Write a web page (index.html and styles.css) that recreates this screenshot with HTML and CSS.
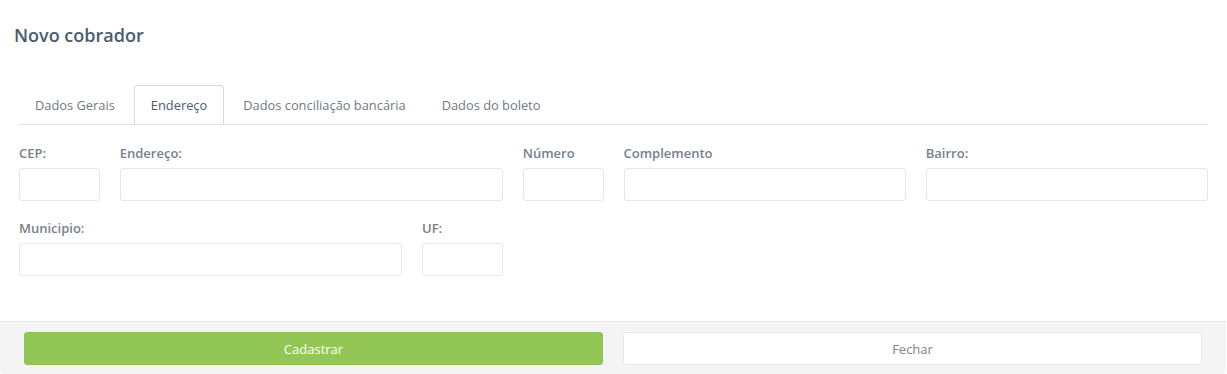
FILE: index.html
```html
<!DOCTYPE html>
<html>
<head>
    <title>Novo cobrador</title>
    <link rel="stylesheet" href="styles.css">
</head>
<body>
    <div class="modal">
        <div class="modal-header">
            <h4>Novo cobrador</h4>
        </div>
        <div class="modal-body">
            <ul class="tabs">
                <li><a href="#">Dados Gerais</a></li>
                <li class="active"><a href="#">Endereço</a></li>
                <li><a href="#">Dados conciliação bancária</a></li>
                <li><a href="#">Dados do boleto</a></li>
            </ul>
            <form class="form-grid">
                <div class="field span-1">
                    <label>CEP:</label>
                    <input type="text">
                </div>
                <div class="field span-4">
                    <label>Endereço:</label>
                    <input type="text">
                </div>
                <div class="field span-1">
                    <label>Número</label>
                    <input type="text">
                </div>
                <div class="field span-3">
                    <label>Complemento</label>
                    <input type="text">
                </div>
                <div class="field span-3">
                    <label>Bairro:</label>
                    <input type="text">
                </div>
                <div class="field span-4">
                    <label>Municipio:</label>
                    <input type="text">
                </div>
                <div class="field span-1">
                    <label>UF:</label>
                    <input type="text">
                </div>
            </form>
        </div>
        <div class="modal-footer">
            <button type="button" class="btn btn-success">Cadastrar</button>
            <button type="button" class="btn btn-default">Fechar</button>
        </div>
    </div>
</body>
</html>
```

FILE: styles.css
```css
* { box-sizing: border-box; }
body { margin: 0; background: #fff; font-family: "Open Sans", "Noto Sans", sans-serif; font-size: 13px; }
.modal { width: 1226px; background: #fff; border-radius: 4px; overflow: hidden; }
.modal-header { padding: 23px 14px 0; }
.modal-header h4 { margin: 0; font-size: 18px; line-height: 24px; font-weight: 600; color: #4b5b70; }
.modal-body { padding: 38px 18px 45px 18px; }
.tabs { list-style: none; margin: 0; padding: 0; display: flex; border-bottom: 1px solid #dee2e6; }
.tabs li { margin-right: 2px; margin-bottom: -1px; }
.tabs a { display: block; padding: 9px 16px 9px 16px; line-height: 20px; font-size: 12.85px; border: 1px solid transparent; border-radius: 4px 4px 0 0; color: #6f7a85; text-decoration: none; }
.tabs li.active a { border-color: #d5dbe1; border-bottom-color: #dee2e6; color: #4b5b70; }
.form-grid { display: grid; grid-template-columns: repeat(12, 1fr); column-gap: 20px; row-gap: 17px; margin-top: 18px; padding-left: 1px; }
.span-1 { grid-column: span 1; }
.span-3 { grid-column: span 3; }
.span-4 { grid-column: span 4; }
.field label { display: block; line-height: 20px; margin-bottom: 5px; font-weight: 600; color: #76818b; }
.field input { display: block; width: 100%; height: 33px; border: 1px solid #e3e6ea; border-radius: 3px; background: #fff; font-family: inherit; font-size: 13px; padding: 6px 10px; }
.modal-footer { background: #f4f4f4; border-top: 1px solid #e4e4e4; padding: 10px 24px 9px; display: grid; grid-template-columns: 1fr 1fr; gap: 20px; }
.btn { height: 33px; border-radius: 3px; font-family: inherit; font-size: 13px; cursor: pointer; }
.btn-success { background: #92c756; border: 1px solid #8ec351; color: #fff; }
.btn-default { background: #fff; border: 1px solid #e6e6e6; color: #7b858f; }
```
